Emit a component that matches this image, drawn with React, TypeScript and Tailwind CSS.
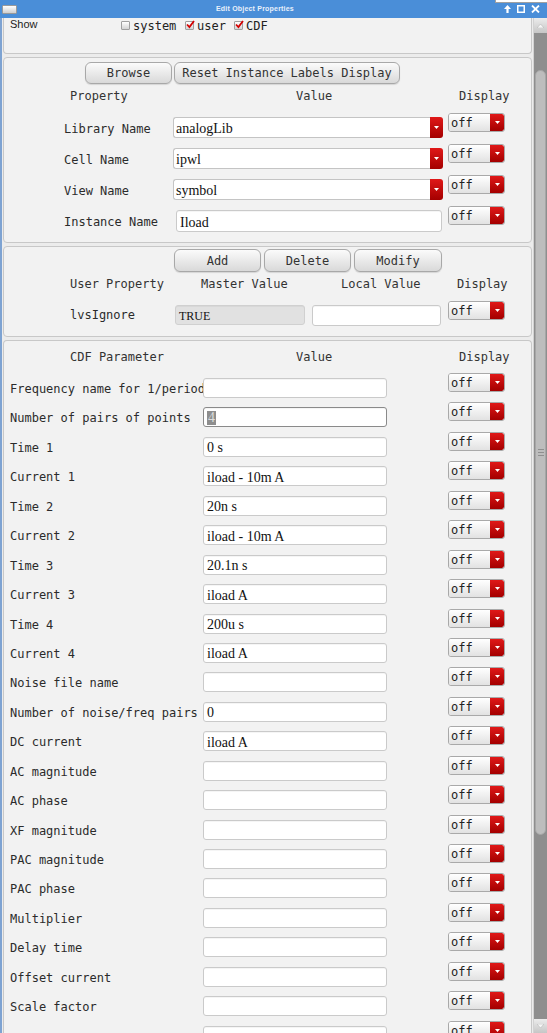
import React from 'react'

const mono = "font-['DejaVu_Sans_Mono',monospace]"
const serif = "font-['Liberation_Serif',serif]"

const cdfRows: [string, string][] = [
  ['Frequency name for 1/period', ''],
  ['Number of pairs of points', '4'],
  ['Time 1', '0 s'],
  ['Current 1', 'iload - 10m A'],
  ['Time 2', '20n s'],
  ['Current 2', 'iload - 10m A'],
  ['Time 3', '20.1n s'],
  ['Current 3', 'iload A'],
  ['Time 4', '200u s'],
  ['Current 4', 'iload A'],
  ['Noise file name', ''],
  ['Number of noise/freq pairs', '0'],
  ['DC current', 'iload A'],
  ['AC magnitude', ''],
  ['AC phase', ''],
  ['XF magnitude', ''],
  ['PAC magnitude', ''],
  ['PAC phase', ''],
  ['Multiplier', ''],
  ['Delay time', ''],
  ['Offset current', ''],
  ['Scale factor', ''],
  ['', ''],
]

function Btn({ label, w }: { label: string; w: string }) {
  return (
    <div
      className={`${w} h-full flex items-center justify-center rounded-[6px] border border-[#a8a8a8] bg-linear-to-b from-[#fbfbfb] to-[#d9d9d9] shadow-[0_1px_1px_rgba(0,0,0,0.12)] text-[12px] text-[#333] ${mono}`}
    >
      {label}
    </div>
  )
}

function RedArrow({ className = '' }: { className?: string }) {
  return (
    <div className={`flex items-center justify-center bg-linear-to-b from-[#e01818] to-[#a40000] ${className}`}>
      <svg width="5" height="3" viewBox="0 0 5 3">
        <path d="M0 0h5L2.5 3z" fill="#fff" />
      </svg>
    </div>
  )
}

function DisplayCombo({ className = '' }: { className?: string }) {
  return (
    <div className={`flex w-[57px] h-[19px] rounded-[3px] border border-[#a9a9a9] overflow-hidden shrink-0 ${className}`}>
      <div className={`flex-1 bg-linear-to-b from-white to-[#e2e2e2] pl-[2px] text-[12px] leading-[18px] text-[#222] ${mono}`}>
        off
      </div>
      <RedArrow className="w-[14px] rounded-r-[2px]" />
    </div>
  )
}

function ValueCombo({ value }: { value: string }) {
  return (
    <div className="flex w-[270px] h-[21px] mt-[7px]">
      <div className={`flex-1 flex items-center pl-[2px] pt-[2px] bg-white border border-r-0 border-[#c4c4c4] rounded-l-[3px] text-[14px] text-[#111] ${serif}`}>
        {value}
      </div>
      <RedArrow className="w-[13px] rounded-r-[3px]" />
    </div>
  )
}

function Field({
  value = '',
  className = '',
  variant = 'normal',
}: {
  value?: string
  className?: string
  variant?: 'normal' | 'gray' | 'focus'
}) {
  const look =
    variant === 'gray'
      ? 'bg-[#e1e1e1] border-[#d0d0d0] text-[12px]'
      : variant === 'focus'
        ? 'bg-white border-[#8a8a8a] text-[14px]'
        : 'bg-white border-[#cacaca] text-[14px]'
  return (
    <div
      className={`flex items-center pl-[3px] pt-[2px] border rounded-[3px] text-[#111] whitespace-nowrap overflow-hidden shadow-[inset_0_1px_0_rgba(0,0,0,0.04)] ${serif} ${look} ${className}`}
    >
      {variant === 'focus' ? <span className="bg-[#8e8e8e] text-[#dcdcdc] leading-[14px] px-[1px]">{value}</span> : value}
    </div>
  )
}

function Check({ checked }: { checked?: boolean }) {
  return (
    <div className="relative w-[9px] h-[9px] border border-[#a0a0a0] bg-linear-to-b from-white to-[#d4d4d4] rounded-[1px] shrink-0">
      {checked && (
        <svg className="absolute -top-[2px] left-0" width="9" height="9" viewBox="0 0 9 9">
          <path d="M1 4.5 L3.4 7 L8 1" stroke="#d40000" strokeWidth="1.8" fill="none" />
        </svg>
      )}
    </div>
  )
}

function TitleBar() {
  return (
    <div className="relative h-[18px] shrink-0 bg-[#4a8ed8] flex items-center">
      <div className="ml-[2px] w-[15px] h-[9px] border border-[#9a9a9a] rounded-[1px] bg-linear-to-b from-white to-[#cfcfcf]" />
      <div className="ml-[199px] text-[7px] font-bold text-[#e8f0fb] tracking-[0.2px] font-['Liberation_Sans',sans-serif]">
        Edit Object Properties
      </div>
      <div className="ml-auto mr-[7px] flex items-center gap-[6px]">
        <svg width="7" height="8" viewBox="0 0 7 8">
          <path d="M3.5 0L7 4H4.6V8H2.4V4H0z" fill="#fff" />
        </svg>
        <svg width="8" height="8" viewBox="0 0 8 8">
          <rect x="0.75" y="0.75" width="6.5" height="6.5" stroke="#fff" strokeWidth="1.5" fill="none" />
        </svg>
        <svg width="9" height="8" viewBox="0 0 9 8">
          <path d="M1 0.5L8 7.5M8 0.5L1 7.5" stroke="#fff" strokeWidth="1.8" />
        </svg>
      </div>
      {/* piece of the window behind */}
      <div className="absolute top-0 right-0 w-[52px] h-[3px] bg-white border-b border-l border-[#a0a0a0]" />
    </div>
  )
}

function Scrollbar() {
  return (
    <div className="w-[14px] shrink-0 flex flex-col bg-[#8e8e8e] border-l border-[#d2d2d2]">
      <div className="h-[15px] bg-linear-to-b from-[#ececec] to-[#c6c6c6] flex items-center justify-center">
        <svg width="7" height="4" viewBox="0 0 7 4">
          <path d="M0 4L3.5 0L7 4z" fill="#f6f6f6" stroke="#b0b0b0" strokeWidth="0.5" />
        </svg>
      </div>
      <div className="mt-[37px] mx-[1px] h-[765px] rounded-full bg-[#bdbdbd] border border-[#a6a6a6] flex flex-col items-center justify-center gap-[2px]">
        <div className="w-[6px] h-px bg-[#8f8f8f]" />
        <div className="w-[6px] h-px bg-[#8f8f8f]" />
        <div className="w-[6px] h-px bg-[#8f8f8f]" />
      </div>
      <div className="flex-1" />
      <div className="h-[14px] bg-linear-to-b from-[#ececec] to-[#c6c6c6] flex items-center justify-center">
        <svg width="7" height="4" viewBox="0 0 7 4">
          <path d="M0 0L3.5 4L7 0z" fill="#f6f6f6" stroke="#b0b0b0" strokeWidth="0.5" />
        </svg>
      </div>
    </div>
  )
}

export default function App() {
  const label = `text-[12px] text-[#2b2b2b] ${mono}`
  const header = `text-[12px] leading-[14px] text-[#333] ${mono}`

  return (
    <div className="w-[547px] h-[1033px] overflow-hidden bg-[#ececec] flex flex-col">
      <TitleBar />

      <div className="flex flex-1 min-h-0 border-l-2 border-[#7ea3d2]">
        <div className="flex-1 flex flex-col px-px">
          {/* Show */}
          <div className="h-[36px] shrink-0 flex items-start border-x border-b border-[#c8c8c8] rounded-b-[4px] bg-[#f2f2f2]">
            <div className="w-[117px] pl-[6px] text-[11px] leading-[13px] text-[#222] font-['Liberation_Sans',sans-serif]">
              Show
            </div>
            <div className={`mt-[3px] h-[9px] flex items-center text-[12px] text-[#222] ${mono}`}>
              <Check />
              <span className="ml-[3px] w-[52px]">system</span>
              <Check checked />
              <span className="ml-[3px] w-[37px]">user</span>
              <Check checked />
              <span className="ml-[3px]">CDF</span>
            </div>
          </div>

          {/* Instance properties */}
          <div className="mt-[3px] h-[186px] shrink-0 flex flex-col border border-[#c8c8c8] rounded-[4px] bg-[#f2f2f2]">
            <div className="mt-[4px] h-[22px] flex gap-[2px] pl-[81px]">
              <Btn label="Browse" w="w-[87px]" />
              <Btn label="Reset Instance Labels Display" w="w-[226px]" />
            </div>
            <div className={`h-[26px] pt-[5px] flex ${header}`}>
              <div className="w-[292px] pl-[66px]">Property</div>
              <div className="w-[163px]">Value</div>
              <div>Display</div>
            </div>
            {[
              ['Library Name', 'analogLib'],
              ['Cell Name', 'ipwl'],
              ['View Name', 'symbol'],
            ].map(([name, value]) => (
              <div key={name} className="h-[31px] flex items-start">
                <div className={`w-[169px] pl-[60px] mt-[7px] pt-[2px] h-[21px] flex items-center ${label}`}>{name}</div>
                <div className="w-[275px]">
                  <ValueCombo value={value} />
                </div>
                <DisplayCombo className="mt-[3px]" />
              </div>
            ))}
            <div className="h-[31px] flex items-start">
              <div className={`w-[169px] pl-[60px] mt-[7px] pt-[2px] h-[21px] flex items-center ${label}`}>Instance Name</div>
              <div className="w-[275px]">
                <Field value="Iload" className="ml-[3px] mt-[7px] w-[266px] h-[22px]" />
              </div>
              <DisplayCombo className="mt-[3px]" />
            </div>
          </div>

          {/* User properties */}
          <div className="mt-[3px] h-[91px] shrink-0 flex flex-col border border-[#c8c8c8] rounded-[4px] bg-[#f2f2f2]">
            <div className="mt-[2px] h-[23px] flex gap-[3px] pl-[170px]">
              <Btn label="Add" w="w-[87px]" />
              <Btn label="Delete" w="w-[87px]" />
              <Btn label="Modify" w="w-[88px]" />
            </div>
            <div className={`h-[26px] pt-[5px] flex ${header}`}>
              <div className="w-[197px] pl-[66px]">User Property</div>
              <div className="w-[140px]">Master Value</div>
              <div className="w-[116px]">Local Value</div>
              <div>Display</div>
            </div>
            <div className="h-[29px] flex items-start">
              <div className={`w-[171px] pl-[66px] mt-[7px] h-[20px] flex items-center ${label}`}>lvsIgnore</div>
              <Field value="TRUE" variant="gray" className="mt-[7px] w-[130px] h-[20px]" />
              <Field className="ml-[7px] mt-[7px] w-[129px] h-[21px]" />
              <DisplayCombo className="ml-[7px] mt-[3px]" />
            </div>
          </div>

          {/* CDF parameters */}
          <div className="mt-[3px] flex-1 flex flex-col border border-b-0 border-[#c8c8c8] rounded-t-[4px] bg-[#f2f2f2]">
            <div className={`h-[30px] pt-[9px] shrink-0 flex ${header}`}>
              <div className="w-[292px] pl-[66px]">CDF Parameter</div>
              <div className="w-[163px]">Value</div>
              <div>Display</div>
            </div>
            {cdfRows.map(([name, value], i) => (
              <div key={i} className="h-[29.45px] shrink-0 flex items-start">
                <div
                  className={`w-[199px] pl-[6px] mt-[7px] pt-[2px] h-[20px] flex items-center overflow-hidden whitespace-nowrap ${label}`}
                >
                  {name}
                </div>
                <Field
                  value={value}
                  variant={i === 1 ? 'focus' : 'normal'}
                  className="mt-[7px] w-[184px] h-[20px] shrink-0"
                />
                <div className="w-[61px] shrink-0" />
                <DisplayCombo className="mt-[2px]" />
              </div>
            ))}
          </div>
        </div>

        <Scrollbar />
      </div>
    </div>
  )
}
